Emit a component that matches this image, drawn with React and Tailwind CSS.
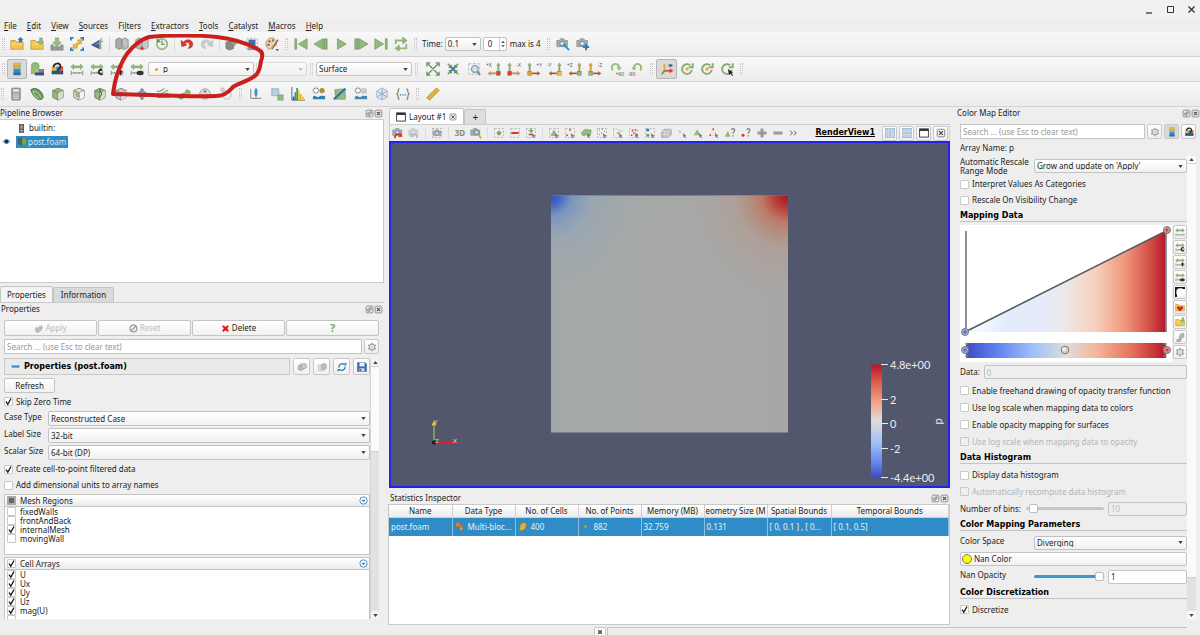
import { useState } from "react";

const green = "#93bb7c";
const darkGreen = "#5f8f4e";

const cube = (fill) => (
  <>
    <path d="M2 4 8 1.5 14 4v8l-6 3-6-3z" fill={fill} stroke="#666" strokeWidth="0.8" />
    <path d="M2 4l6 2.5L14 4M8 6.5V15" fill="none" stroke="#666" strokeWidth="0.8" />
    <path d="M8 6.5 14 4v8l-6 3z" fill="#fff" opacity="0.6" />
  </>
);

const rescale = (
  <>
    <path d="M1 5.5 4 2.5v2h8v-2l3 3-3 3v-2H4v2z" fill={green} stroke={darkGreen} strokeWidth="0.5" />
    <path d="M1.500 10v5M14.500 10v5M2 12.500h12M5 11.500v2M8 11.500v2M11 11.500v2" stroke="#777" strokeWidth="0.9" fill="none" />
  </>
);

const folder = (
  <>
    <path d="M1 14V4h5l1.500 2H15v8z" fill="#f4c64e" stroke="#b98a1f" strokeWidth="0.8" />
    <path d="M1.500 8h13" stroke="#fbe08f" />
  </>
);

const dashed = <rect x="2" y="2" width="12" height="12" fill="none" stroke="#aaa" strokeDasharray="3 2" />;
const picker = <path d="M9 8l5 4-2 .3 1.500 2-1 .7-1.300-2-1.200 1.300z" fill="#777" />;

const camera = (
  <>
    <path d="M1 4h3l1-2h4l1 2h3v7H1z" fill="#a9b0b5" stroke="#7d858a" strokeWidth="0.8" />
    <circle cx="7" cy="7.500" r="2.600" fill="#dceaf3" stroke="#5f7482" />
  </>
);

const axis = (a, b, left) =>
  left ? (
    <>
      <path d="M13 1l2 3h-1.200v7h-1.600V4H11z" fill={a} stroke="#5d5d3d" strokeWidth="0.300" />
      <path d="M1 13l3-2.200v1.400h6v1.600H4v1.400z" fill={b} stroke="#7d4d2d" strokeWidth="0.300" />
      <rect x="11" y="11" width="4" height="4" fill={a} stroke="#765" strokeWidth="0.700" />
    </>
  ) : (
    <>
      <path d="M3 1l2 3H3.800v7H2.200V4H1z" fill={a} stroke="#5d5d3d" strokeWidth="0.300" />
      <path d="M15 13l-3-2.200v1.400H6v1.600h6v1.400z" fill={b} stroke="#7d4d2d" strokeWidth="0.300" />
      <rect x="1" y="11" width="4" height="4" fill={a} stroke="#765" strokeWidth="0.700" />
    </>
  );

const ring = (
  <path d="M13.500 9A5.600 5.600 0 1 1 11.500 3.700M14.500 1.500v4.500h-4.500" fill="none" stroke="#86ad70" strokeWidth="2.200" />
);

const gear = (
  <>
    <circle cx="8" cy="8" r="4.500" fill="none" stroke="#aaa" strokeWidth="2.200" />
    <path d="M8 1v2.500M8 12.500V15M1.900 4.500l2.200 1.300M11.900 10.200l2.200 1.300M1.900 11.500l2.200-1.300M11.900 5.800l2.200-1.300" stroke="#aaa" strokeWidth="2.200" />
    <circle cx="8" cy="8" r="1.500" fill="#bbb" />
  </>
);

const colorBar = (
  <>
    <rect x="4" y="1" width="8" height="14" fill="#3b8fc0" />
    <rect x="4" y="1" width="8" height="4" fill="#f3b02b" />
    <rect x="4" y="5" width="8" height="3" fill="#b5b95f" />
    <rect x="4" y="12" width="8" height="3" fill="#2f67a8" />
  </>
);

const flagBar = (
  <>
    <path d="M2 5h5v9H2z" fill="#f3b02b" />
    <path d="M7 5h4v9H7z" fill="#3b9bc0" />
    <path d="M11 5h4v9h-4z" fill="#e5542d" />
    <path d="M2 10h13v4H2z" fill="#29558c" />
  </>
);

const icons = {
  open: <>{folder}<path d="M10 6h4V3h1.500L12 0 8.500 3H10z" fill="#2f7eb5" /></>,
  load: <>{folder}<path d="M11 1h3v4h1.500L12 9 8.500 5H11z" fill={green} stroke={darkGreen} strokeWidth="0.5" /></>,
  save: <><path d="M1 9h3v2h8V9h3v6H1z" fill="#999" stroke="#777" strokeWidth="0.6" /><path d="M6 1h4v5h3l-5 5-5-5h3z" fill={green} stroke={darkGreen} strokeWidth="0.5" /></>,
  capture: <><path d="M1 4V1h3M12 1h3v3M15 12v3h-3M4 15H1v-3" fill="none" stroke="#2f7eb5" strokeWidth="2" /><path d="M3 13l1-5 1.500 1 4-4-1-1.500 5-.5-.5 5-1.500-1-4 4 1 1.500z" fill="#f4b62c" stroke="#b98a1f" strokeWidth="0.6" /></>,
  prism: <><path d="M1 9 11 3v11z" fill="#3a5a9c" /><path d="M4 9l7-4v3z" fill="#57b07d" /><path d="M6 9l5 2v2z" fill="#d83a2d" /><path d="M12 3l2-2M13 5h2" stroke="#777" /><path d="M11 3h2v11h-2z" fill="#8aa" /></>,
  server: <><path d="M1 3l4-2 3 2v9l-3 2-4-2z" fill="#aaa" stroke="#808080" /><path d="M8 3l3-2 4 2v9l-4 2-3-2z" fill="#c0c0c0" stroke="#888" /><path d="M7 11h4v2l-2 2-2-2z" fill={green} /></>,
  serverOff: <><path d="M1 3l4-2 3 2v9l-3 2-4-2z" fill="#b5b5b5" stroke="#909090" /><path d="M8 3l3-2 4 2v9l-4 2-3-2z" fill="#c9c9c9" stroke="#999" /><circle cx="8" cy="13" r="2" fill="#d33" /></>,
  history: <><circle cx="8" cy="8" r="6" fill="none" stroke={green} strokeWidth="2" /><path d="M2 1v5h5z" fill={darkGreen} /><path d="M8 4v4.500h3" fill="none" stroke={darkGreen} strokeWidth="1.300" /></>,
  undo: <path d="M1 4l1 7 6-2-2.200-1.200C8 5 11 6 11 9c0 2-1 3-2 4 4 0 6-2 5.500-5.500C14 3 8 1 4 5.800z" fill="#d63a2b" stroke="#a02318" strokeWidth="0.5" />,
  redo: <path d="M15 4l-1 7-6-2 2.200-1.200C8 5 5 6 5 9c0 2 1 3 2 4-4 0-6-2-5.500-5.500C2 3 8 1 12 5.800z" fill="#ccc" stroke="#aaa" strokeWidth="0.5" />,
  extract: <><path d="M1 6l5-2 4 2v7l-5 2-4-2z" fill="#8a8a8a" stroke="#666" strokeWidth="0.600" /><path d="M7 6h4V2l4 4-4 4V8H7z" fill={green} stroke={darkGreen} strokeWidth="0.400" /></>,
  clipboard: <><path d="M4 3h8v7H4z" fill="#3d6fb4" /><path d="M3 11h10v4H3z" fill="#999" /><path d="M2 2h12v12H2z" fill="none" stroke="#999" strokeDasharray="2 2" /></>,
  palette: <><path d="M8 1C3 1 1 5 1 8s2 6 5 6c2 0 1-2 2-3s3 0 5-2c1-3-1-8-5-8z" fill="#f0d1a8" stroke="#a37a4d" strokeWidth="0.800" /><circle cx="5" cy="5" r="1.300" fill="#d33" /><circle cx="9" cy="4" r="1.300" fill="#3a9a5a" /><circle cx="4" cy="9" r="1.300" fill="#36c" /><path d="M15 3 8 14" stroke="#9a5a35" strokeWidth="1.500" /><path d="M12 14h4l-2 2z" fill="#333" /></>,
  first: <path d="M1 2h2v12H1zM15 2v12L5 8z" fill={green} stroke={darkGreen} strokeWidth="0.7" />,
  prev: <path d="M10 2v12L0 8zM11 2h1.500v12H11zM13.500 2H15v12h-1.500z" fill={green} stroke={darkGreen} strokeWidth="0.7" />,
  play: <path d="M4 2l10 6-10 6z" fill={green} stroke={darkGreen} strokeWidth="0.7" />,
  next: <path d="M6 2v12l10-6zM1 2h1.500v12H1zM3.500 2H5v12H3.500z" fill={green} stroke={darkGreen} strokeWidth="0.7" />,
  last: <path d="M13 2h2v12h-2zM1 2v12l10-6z" fill={green} stroke={darkGreen} strokeWidth="0.7" />,
  loop: <><path d="M2 8V4h9M14 8v5H5" fill="none" stroke={green} strokeWidth="2.200" /><path d="M10 0l5 4-5 4zM6 9l-5 4 5 3z" fill={green} stroke={darkGreen} strokeWidth="0.500" /></>,
  cameraLink: <>{camera}<path d="M9 9l6 6" stroke="#2f8ecb" strokeWidth="2" /><circle cx="9.500" cy="9.500" r="1.700" fill="#2f8ecb" /></>,
  cameraAdd: <>{camera}<path d="M11.500 8v7M8 11.500h7" stroke="#2f7eb5" strokeWidth="2.400" /></>,
  colorBar,
  editMap: <><circle cx="6" cy="5" r="4.500" fill={green} stroke={darkGreen} strokeWidth="0.600" /><rect x="1" y="7" width="6" height="7" fill={green} /><g transform="translate(4 4) scale(.8)">{flagBar}</g></>,
  separateMap: <>{flagBar}<path d="M4 6c0-5 8-6 8-1 0 3-3 2-3 5" fill="none" stroke="#222" strokeWidth="2" /></>,
  rescale,
  rescaleC: <>{rescale}<path d="M14 9.500a2.500 2.500 0 1 0 0 4" fill="none" stroke="#222" strokeWidth="2" /></>,
  rescaleT: <>{rescale}<path d="M12 9v6M10 11h4" fill="none" stroke="#222" strokeWidth="2" /></>,
  rescaleV: <>{rescale}<ellipse cx="11.500" cy="12.500" rx="4" ry="2.500" fill="#333" /></>,
  fit: <path d="M2 2l12 12M14 2 2 14M1 5V1h4M11 1h4v4M15 11v4h-4M5 15H1v-4" fill="none" stroke="#6e8f5c" strokeWidth="1.500" />,
  fitData: <><path d="M2 2l12 12M14 2 2 14M6 3v3H3M10 3v3h3M6 13v-3H3M10 13v-3h3" fill="none" stroke="#6e8f5c" strokeWidth="1.500" /><circle cx="8" cy="8" r="2.600" fill="#2f8ecb" /></>,
  zoomBox: <>{dashed}<circle cx="9" cy="8" r="3.800" fill="#cfe2f0" stroke="#7d99ad" strokeWidth="1.300" /><path d="M12 11l3 4" stroke="#888" strokeWidth="2" /></>,
  posX: <>{axis("#8cb96c", "#e0a32a", true)}<rect x="11" y="11" width="4" height="4" fill="#d8402c" /></>,
  negX: <>{axis("#8cb96c", "#e0a32a", false)}<rect x="1" y="11" width="4" height="4" fill="#d8402c" /></>,
  posY: <>{axis("#8cb96c", "#d8402c", false)}<rect x="1" y="11" width="4" height="4" fill="#e0a32a" /></>,
  negY: <>{axis("#8cb96c", "#d8402c", true)}<rect x="11" y="11" width="4" height="4" fill="#f4c22c" /></>,
  posZ: <>{axis("#e0a32a", "#d8402c", true)}<rect x="11" y="11" width="4" height="4" fill="#8cb96c" /></>,
  negZ: <>{axis("#e0a32a", "#d8402c", false)}<rect x="1" y="11" width="4" height="4" fill="#8cb96c" /></>,
  rotCw: <><path d="M4.500 9.500A4.200 4.200 0 1 1 11.500 6" fill="none" stroke={green} strokeWidth="2.200" /><path d="M8.500 6h6l-3 4z" fill={green} /></>,
  rotCcw: <><path d="M11.500 9.500A4.200 4.200 0 1 0 4.500 6" fill="none" stroke={green} strokeWidth="2.200" /><path d="M7.500 6h-6l3 4z" fill={green} /></>,
  orient: <><path d="M5 2v8h8" fill="none" stroke="#e0a32a" strokeWidth="1.800" /><path d="M5 10h9M11 8l3 2-3 2" fill="none" stroke="#d8402c" strokeWidth="1.500" /><path d="M5 10l-3 4" stroke="#6e9a58" strokeWidth="2" /><ellipse cx="12" cy="4" rx="3.500" ry="2" fill="#aab7c4" /><circle cx="12" cy="4" r="1.400" fill="#345" /></>,
  center: <>{ring}<circle cx="8" cy="8" r="2" fill="#f0a92a" /></>,
  pickCenter: <>{ring}<path d="M9 8l6 4-2 .500 2 2.500-1 1-2-2.500-1.500 1.500z" fill="#222" /></>,
  calculator: <><rect x="3" y="1" width="10" height="14" rx="1" fill="#9a9a9a" stroke="#777" strokeWidth="0.600" /><rect x="4.500" y="2.500" width="7" height="3" fill="#e4e4e4" /><path d="M5 8h6M5 10.500h6M5 13h6" stroke="#fff" strokeWidth="1.300" strokeDasharray="1.500 .8" /></>,
  contour: <><path d="M1 3c6-4 14 2 14 9-3 6-12 0-14-9z" fill="#6f9c5e" stroke="#466b3a" /><path d="M4 5c4 0 7 3 8 7M3 5c1 4 4 7 7 8" fill="none" stroke="#c8ddb8" /></>,
  clip: cube(green),
  slice: <>{cube("#e3e3e3")}<path d="M4 5l5 2v6l-5-2z" fill={green} /></>,
  threshold: <>{cube(green)}<path d="M7 2l3 6-3 5" stroke="#444" fill="none" /></>,
  subset: cube("#c9c9c9"),
  glyph: <><path d="M8 1l3 3H5zM8 15l3-3H5zM1 8l3-3v6zM15 8l-3-3v6z" fill="#5e86b2" /><circle cx="8" cy="8" r="3.600" fill="#9db7d1" stroke="#4f7399" /></>,
  stream: <path d="M1 12h14M1 8h4c3 0 4-4 9-4M1 10h5c3 0 3-3 8-3M1 5h3c2 0 3-3 6-3" fill="none" stroke="#7ca566" strokeWidth="1.200" />,
  warp: <path d="M1 12l3-4 5-1 2-4 4 2-1 6-6 1-3 2z" fill={green} stroke={darkGreen} strokeWidth="0.800" />,
  group: <><circle cx="8" cy="8" r="6" fill="#ddd" stroke="#999" /><circle cx="8" cy="5" r="1.600" fill="#888" /><circle cx="5" cy="10" r="1.600" fill="#888" /><circle cx="11" cy="10" r="1.600" fill="#888" /></>,
  particle: <><circle cx="9" cy="9" r="5" fill="#eee" stroke="#bbb" /><circle cx="4" cy="3" r="2" fill="#ddd" stroke="#aaa" /></>,
  probe: <><path d="M2 2v11h12" fill="none" stroke="#777" /><ellipse cx="8" cy="6" rx="1.800" ry="4.500" fill="#3c97cf" /><path d="M8 10v3" stroke="#3c97cf" /></>,
  select: <><rect x="2" y="2" width="8" height="8" fill="#b9cfe4" stroke="#7e9cb8" strokeDasharray="2 1" /><rect x="9" y="9" width="6" height="6" fill={green} stroke={darkGreen} strokeWidth="0.600" /></>,
  histogram: <><path d="M1 0v15h15" fill="none" stroke="#333" strokeWidth="0.800" /><path d="M2 11h2v4H2z" fill="#2b5ca8" /><path d="M4 6h2v9H4z" fill="#2f8ecb" /><path d="M6 1h2v14H6z" fill="#38a06a" /><path d="M8 4h2v11H8z" fill="#e6cf2c" /><path d="M10 8h2v7h-2z" fill="#f0a92a" /><path d="M12 11h3v4h-3z" fill="#f2d02c" /></>,
  plotTime: <><circle cx="4.500" cy="4" r="3" fill="#fff" stroke="#777" /><circle cx="11.500" cy="4" r="3" fill="#b58a3c" /><path d="M1 11c3-3 4 2 7 0s4 0 7-1v4H1z" fill="#2f7eb5" /></>,
  plotLine: <><path d="M2 3l12-1v12H3z" fill={green} stroke={darkGreen} strokeWidth="0.600" /><path d="M1 14 14 2" stroke="#2f6fa5" strokeWidth="2.400" /></>,
  plotSel: <><circle cx="4.500" cy="4" r="3" fill="#fff" stroke="#777" /><path d="M9 2h5v5H9z" fill="#cbd9c0" stroke="#999" strokeDasharray="1 1" /><path d="M1 11c3-3 4 2 7 0s4 0 7-1v4H1z" fill="#4b87b5" /></>,
  star: <><path d="M8 1l6 3.500v7L8 15l-6-3.500v-7z" fill="#dfe9f2" stroke="#9bb0c4" /><path d="M8 2v12M3 5l10 6M13 5 3 11" stroke="#7f9fc0" /></>,
  braces: <><path d="M4 2C1 2 4 7 1 8c3 1 0 6 3 6M12 2c3 0 0 5 3 6-3 1 0 6-3 6" fill="none" stroke="#777" strokeWidth="1.300" /><path d="M4.500 9h1.500M7.300 9h1.500M10 9h1.500" stroke="#2f7eb5" strokeWidth="1.500" /></>,
  ruler: <path d="M1 12 12 1l3 3L4 15z" fill="#e3b23a" stroke="#a37b1d" strokeWidth="0.800" />,
  camUndo: <>{camera}<path d="M3 15c-1-5 3-8 8-6l1-2 2 6-6 .5 1.500-2C7 10 5 12 5 15z" fill="#d63a2b" /></>,
  camRedo: <><g opacity="0.4">{camera}</g><path d="M13 15c1-5-3-8-8-6L4 7l-2 6 6 .5L6.500 11.500C9 10 11 12 11 15z" fill="#bbb" /></>,
  camShot: <>{dashed}<g transform="translate(2 2) scale(.85)">{camera}</g></>,
  camZoom: <>{camera}<circle cx="9" cy="7" r="3" fill="#bcd4e6" stroke="#4d7591" /><path d="M11 10l4 5" stroke="#d6a52c" strokeWidth="2.200" /></>,
  selAdd: <>{dashed}<path d="M8 5v6M5 8h6" stroke="#79a860" strokeWidth="3" /></>,
  selSub: <>{dashed}<path d="M3 8h10" stroke="#d63a2b" strokeWidth="2.600" /></>,
  selToggle: <>{dashed}<path d="M8 2v6M5 5h6" stroke="#79a860" strokeWidth="2" /><path d="M5 10h5" stroke="#d63a2b" strokeWidth="2" />{picker}</>,
  selCells: <>{dashed}<path d="M8 3l5 9H3z" fill={green} />{picker}</>,
  selPoints: <>{dashed}<circle cx="8" cy="4" r="1.200" fill="#d63a2b" /><circle cx="4" cy="11" r="1.200" fill="#d63a2b" />{picker}</>,
  selFrustum: <><path d="M2 7l5-4 8 1-1 7-6-1-2 2-3-1z" fill={green} stroke={darkGreen} strokeWidth="0.600" />{picker}</>,
  selFrPts: <>{dashed}<path d="M4 4h1M8 3h1M11 6h1M7 8h1M4 10h1" stroke="#d63a2b" strokeWidth="1.500" />{picker}</>,
  selPoly: <><path d="M2 2l12 3-6 3 6 6H2z" fill="none" stroke="#aaa" strokeDasharray="2 1.500" /><path d="M5 8l5-2v4z" fill={green} />{picker}</>,
  selPolyPts: <><path d="M2 2l12 3-4 3 4 6H2z" fill="none" stroke="#aaa" strokeDasharray="2 1.500" /><path d="M5 5h2M9 4h2M7 8h2M4 11h2M11 10h2" stroke="#d63a2b" strokeWidth="1.700" />{picker}</>,
  selBlocks: <>{dashed}<circle cx="5" cy="4" r="2" fill="#2f7eb5" /><circle cx="5" cy="11" r="2" fill="#57a070" />{picker}</>,
  selFrBlocks: <g opacity="0.7"><path d="M2 6l4-3h9v7l-4 4H2z" fill="#aaa" stroke="#888" /><path d="M2 6h9l4-3M11 6v8M2 10h9M6.500 6v8" fill="none" stroke="#ddd" /></g>,
  selHover: <><circle cx="5" cy="6" r="2" fill="#ccc" />{picker}</>,
  selTri: <><path d="M7 3l5 8H2z" fill={green} />{picker}</>,
  selTriPts: <><path d="M7 3l5 8H2z" fill="none" stroke="#bbb" strokeDasharray="2 1.500" /><circle cx="7" cy="3" r="1.200" fill="#d63a2b" /><circle cx="3" cy="11" r="1.200" fill="#d63a2b" />{picker}</>,
  askCells: <><path d="M5 5l4 8H1z" fill={green} /><path d="M10 4c1-3 5-2 4 1-1 2-2 1-2 4M12 11v1.500" fill="none" stroke="#777" strokeWidth="1.500" /></>,
  askPoints: <><circle cx="4" cy="11" r="2" fill="#d63a2b" /><path d="M9 4c1-3 5-2 4 1-1 2-2 1-2 4M11 11v1.500" fill="none" stroke="#777" strokeWidth="1.500" /></>,
  grow: <path d="M8 2v12M2 8h12" stroke="#999" strokeWidth="4" />,
  shrink: <path d="M2 8h12" stroke="#999" strokeWidth="4" />,
  more: <path d="M3 5l3 3-3 3M8 5l3 3-3 3" fill="none" stroke="#555" strokeWidth="1.300" />,
  splitH: <><rect x="0" y="1" width="16" height="14" fill="#bcd3ea" stroke="#8ea3b8" /><path d="M8 1v14" stroke="#fff" strokeWidth="4" /><path d="M8 1v14" stroke="#888" strokeWidth="1.600" /></>,
  splitV: <><rect x="0" y="1" width="16" height="14" fill="#bcd3ea" stroke="#8ea3b8" /><path d="M0 8h16" stroke="#fff" strokeWidth="4" /><path d="M0 8h16" stroke="#888" strokeWidth="1.600" /></>,
  windowed: <><rect x="1" y="1.500" width="14" height="13" fill="#fff" stroke="#333" strokeWidth="1.400" /><path d="M1 3h14" stroke="#333" strokeWidth="3.500" /></>,
  close: <><rect x="2" y="2" width="12" height="12" rx="2" fill="#eee" stroke="#777" strokeWidth="1.400" /><path d="M5 5l6 6M11 5l-6 6" stroke="#444" strokeWidth="1.800" /></>,
  float: <><rect x="2" y="2" width="12" height="12" rx="2" fill="#eee" stroke="#777" strokeWidth="1.400" /><path d="M5 7h4v4H5zM8 5h3v3" fill="none" stroke="#555" strokeWidth="1.200" /></>,
  gear,
  apply: <path d="M3 6h6l1-3 2 1 2-2 1 5-2 5-4 1v2H5l-3-3z" fill="#bbb" stroke="#aaa" strokeWidth="0.600" />,
  reset: <><circle cx="8" cy="8" r="6" fill="none" stroke="#9a9a9a" strokeWidth="2.200" /><path d="M4 12l8-8" stroke="#9a9a9a" strokeWidth="2.200" /></>,
  del: <path d="M2 4l2-2 4 3 4-3 2 2-3 4 3 4-2 2-4-3-4 3-2-2 3-4z" fill="#d3221f" />,
  copy: <><path d="M2 6l5-3 4 2v6l-5 3-4-2z" fill="#bbb" stroke="#999" /><path d="M7 4l4-2 4 2v5l-4 2-4-2z" fill="#ccc" stroke="#999" /></>,
  paste: <><path d="M2 5h8v9H2z" fill="#ddd" stroke="#bbb" /><path d="M7 4l4-2 4 2v6l-4 3-4-2z" fill="#bbb" stroke="#aaa" /></>,
  refresh: <><path d="M3 9a5.500 5.500 0 0 1 9-5M13 7a5.500 5.500 0 0 1-9 5" fill="none" stroke="#2f7eb5" strokeWidth="2" /><path d="M10 5h5V0zM6 11H1v5z" fill="#2f7eb5" /></>,
  floppy: <><path d="M1 1h12l2 2v12H1z" fill="#3d6fb4" stroke="#2b4f85" /><path d="M4 1h8v6H4z" fill="#eef3f8" /><path d="M4 10h8v5H4z" fill="#dde" /><path d="M5 11h2v3H5z" fill="#345" /></>,
  minus: <path d="M1 6h14v4H1z" fill="#2f8ecb" />,
  computer: <><rect x="4" y="1" width="8" height="14" fill="#666" stroke="#333" /><path d="M6 4h4M6 7h4" stroke="#eee" strokeWidth="1.300" /><path d="M6 11h4v2H6z" fill="#ccc" /></>,
  foam: <><path d="M1 3l5-1v12l-5-2z" fill="#5c6b52" stroke="#39452f" /><path d="M7 3l5-1 3 2v9l-4 2-4-2z" fill="#79a35c" stroke="#567a41" /></>,
  eye: <><path d="M0 8c4-6 12-6 16 0-4 6-12 6-16 0z" fill="#b9c6d4" /><circle cx="8" cy="8" r="4" fill="#24679b" /><circle cx="8" cy="8" r="2.300" fill="#101820" /></>,
  expand: <><circle cx="8" cy="8" r="6.500" fill="#fff" stroke="#2f7eb5" strokeWidth="1.500" /><path d="M4.500 6.500h7L8 11z" fill="#2f7eb5" /></>,
  blocks: <><circle cx="5" cy="5" r="4" fill="#cf8a55" stroke="#9a5f32" /><circle cx="10" cy="8" r="4" fill="#c67d4a" stroke="#9a5f32" /><circle cx="11" cy="12" r="3" fill="#d8a268" stroke="#9a5f32" /></>,
  cell: <path d="M4 5l5-4 6 1-1 9-6 4H2z" fill="#d8b53a" stroke="#8f741e" />,
  point: <circle cx="8" cy="8" r="2.200" fill="#e0a32a" />,
  curve: <><path d="M1 15V1h14" fill="none" stroke="#111" strokeWidth="3" /><circle cx="9" cy="9" r="6.500" fill="#fff" /><path d="M0 0h4v4H0zM12 0h4v3h-4zM0 12h3v4H0z" fill="#111" /></>,
  heart: <>{folder}<path d="M8 15 3 10c0-4 4-4 5-1 1-3 5-3 5 1z" fill="#d3221f" /></>,
  wrench: <path d="M3 15v-3h4V8l2-5 5-1v6l-4 2-1 5z" fill="#bbb" stroke="#888" />,
};

const Icon = ({ name, className = "size-[14px]" }) => (
  <svg viewBox="0 0 16 16" className={`shrink-0 ${className}`} aria-hidden="true">
    {icons[name]}
  </svg>
);

const Handle = ({ className = "mx-[3px]" }) => (
  <div className={`h-3 w-[3px] shrink-0 border-x border-dotted border-[#c4c4c4] ${className}`} />
);
const Sep = () => <div className="mx-[2px] h-4 w-px shrink-0 bg-[#dcdcdc]" />;

const ToolButton = ({ name, label, pressed, wide }) => (
  <button
    type="button"
    aria-label={name}
    className={`relative flex h-5 shrink-0 items-center justify-center ${wide ? "w-[21px]" : "w-5"} ${
      pressed ? "rounded-[2px] border border-[#b5b5b5] bg-[#dadada]" : ""
    }`}
  >
    <Icon name={name} />
    {label && <span className={`absolute text-[5px] leading-none text-[#555] ${label.at}`}>{label.text}</span>}
  </button>
);

const Tools = ({ names, wide }) => names.map((n) => <ToolButton key={n} name={n} wide={wide} />);

const Select = ({ id, label, value, options = [], className = "", disabled, dot }) => (
  <div className={`relative flex h-[14px] items-center ${className}`}>
    <select
      id={id}
      aria-label={label}
      defaultValue={value}
      disabled={disabled}
      className={`h-full w-full appearance-none rounded-[2px] border border-[#c2c2c2] bg-linear-to-b from-white to-[#f1f1f1] leading-none outline-none ${
        disabled ? "opacity-50" : ""
      } ${dot ? "pl-[14px]" : "pl-[2px]"}`}
    >
      {[value, ...options].map((o) => (
        <option key={o}>{o}</option>
      ))}
    </select>
    {dot && <span className="pointer-events-none absolute left-[7px] size-[3px] rounded-full bg-[#e0a32a]" />}
    <svg viewBox="0 0 6 4" className={`pointer-events-none absolute right-[4px] h-[3px] w-[5px] ${disabled ? "opacity-30" : ""}`}>
      <path d="M0 0h6L3 4z" fill="#444" />
    </svg>
  </div>
);

const Check = ({ label, checked, disabled, className = "", small }) => (
  <label className={`flex items-center ${small ? "gap-1" : "gap-[3px]"} ${disabled ? "text-[#b5b5b5]" : ""} ${className}`}>
    <span className="relative flex size-[9px] shrink-0">
      <input
        type="checkbox"
        defaultChecked={checked}
        disabled={disabled}
        className="peer size-[9px] appearance-none rounded-[1px] border border-[#c9c9c9] bg-white disabled:bg-[#efefef]"
      />
      <svg viewBox="0 0 9 9" className="pointer-events-none absolute inset-0 hidden size-[9px] peer-checked:block">
        <path d="M2 4.500l1.800 2.700L7 1.500" fill="none" stroke="#111" strokeWidth="1.300" />
      </svg>
    </span>
    <span className="whitespace-nowrap">{label}</span>
  </label>
);

const DockTitle = ({ title, className = "" }) => (
  <div className={`flex h-3 shrink-0 items-center justify-between ${className}`}>
    <h2>{title}</h2>
    <div className="flex">
      <button type="button" aria-label={`Float ${title}`}><Icon name="float" className="size-[9px]" /></button>
      <button type="button" aria-label={`Close ${title}`}><Icon name="close" className="size-[9px]" /></button>
    </div>
  </div>
);

const SmallButton = ({ name, pressed, className = "h-[14px] w-[15px]" }) => (
  <button
    type="button"
    aria-label={name}
    className={`flex shrink-0 items-center justify-center rounded-[2px] border border-[#c8c8c8] ${
      pressed ? "bg-[#d9d9d9]" : "bg-linear-to-b from-white to-[#f0f0f0]"
    } ${className}`}
  >
    <Icon name={name} className="size-[10px]" />
  </button>
);

const ScrollBar = ({ thumb }) => (
  <div className="flex w-[9px] shrink-0 flex-col border-l border-[#d5d5d5] bg-[#e2e2e2]">
    <div className="flex h-2 items-center justify-center bg-[#f4f4f4]">
      <svg viewBox="0 0 6 4" className="h-[3px] w-[5px]"><path d="M0 4h6L3 0z" fill="#444" /></svg>
    </div>
    <div className={`border-y border-[#cfcfcf] bg-[#fbfbfb] ${thumb}`} />
    <div className="mt-auto flex h-2 items-center justify-center bg-[#f4f4f4]">
      <svg viewBox="0 0 6 4" className="h-[3px] w-[5px]"><path d="M0 0h6L3 4z" fill="#444" /></svg>
    </div>
  </div>
);

const menus = ["File", "Edit", "View", "Sources", "Filters", "Extractors", "Tools", "Catalyst", "Macros", "Help"];
// index of the underlined letter in each menu name
const accel = { Filters: 2 };

const MenuBar = () => (
  <nav className="flex h-[13px] shrink-0 items-center gap-[10px] pl-1">
    {menus.map((m) => {
      const i = accel[m] ?? 0;
      return (
        <button key={m} type="button">
          {m.slice(0, i)}<u className="underline-offset-1">{m[i]}</u>{m.slice(i + 1)}
        </button>
      );
    })}
  </nav>
);

const bar = "flex h-[25px] items-center border-b border-[#d2d2d2] bg-linear-to-b from-[#f8f8f8] to-[#ececec]";

const Toolbars = () => (
  <div className="relative shrink-0">
    <div className={bar}>
      <Handle className="mx-[2px]" />
      <Tools names={["open", "load", "save", "capture", "prism"]} />
      <Sep />
      <Tools names={["server", "serverOff", "history"]} />
      <Sep />
      <Tools names={["undo", "redo"]} />
      <Sep />
      <Tools names={["extract", "clipboard", "palette"]} />
      <Handle />
      <Tools names={["first", "prev", "play", "next", "last", "loop"]} />
      <Handle />
      <label htmlFor="time" className="px-[2px]">Time:</label>
      <Select id="time" value="0.1" options={["0.2", "0.3", "0.4", "0.5"]} className="w-9" />
      <div className="ml-[2px] flex h-[14px] w-6 rounded-[2px] border border-[#c2c2c2] bg-white">
        <input aria-label="Time step" defaultValue="0" className="w-[15px] pl-1 outline-none" />
        <svg viewBox="0 0 8 12" className="h-3 w-2 border-l border-[#ccc]">
          <path d="M1.500 4.500h5L4 2zM1.500 7.500h5L4 10z" fill="#444" />
        </svg>
      </div>
      <span className="px-[3px]">max is 4</span>
      <Handle />
      <Tools names={["cameraLink", "cameraAdd"]} />
    </div>
    <div className={bar}>
      <Handle className="mx-[2px]" />
      <ToolButton name="colorBar" pressed />
      <Tools names={["editMap", "separateMap", "rescale", "rescaleC", "rescaleT", "rescaleV"]} />
      <Select label="Coloring array" value="p" options={["U"]} dot className="ml-px w-[106px]" />
      <Select label="Component" value="" disabled className="ml-[2px] w-[51px]" />
      <Handle />
      <Select label="Representation" value="Surface" options={["Wireframe", "Points"]} className="w-24" />
      <Handle />
      <div className="w-[2px]" />
      <Tools names={["fit", "fitData"]} />
      <ToolButton name="zoomBox" wide />
      <ToolButton name="posX" label={{ text: "+X", at: "left-[2px] top-[4px]" }} />
      <ToolButton name="negX" label={{ text: "-X", at: "right-[3px] top-[4px]" }} />
      <ToolButton name="posY" label={{ text: "+Y", at: "right-[2px] top-[4px]" }} />
      <ToolButton name="negY" wide label={{ text: "-Y", at: "left-[3px] top-[4px]" }} />
      <ToolButton name="posZ" label={{ text: "+Z", at: "left-[2px] top-[4px]" }} />
      <ToolButton name="negZ" label={{ text: "-Z", at: "right-[3px] top-[4px]" }} />
      <ToolButton name="rotCw" wide label={{ text: "+90", at: "right-[2px] bottom-[2px]" }} />
      <ToolButton name="rotCcw" wide label={{ text: "-90", at: "left-[2px] bottom-[2px]" }} />
      <Handle />
      <ToolButton name="orient" pressed wide />
      <ToolButton name="center" />
      <ToolButton name="center" />
      <ToolButton name="pickCenter" />
      <Handle />
    </div>
    <div className={bar}>
      <Handle className="mx-px" />
      <Tools wide names={["calculator", "contour", "clip", "slice", "threshold", "subset", "glyph", "stream", "warp", "group", "particle"]} />
      <Handle />
      <Tools wide names={["probe", "select", "histogram", "plotTime", "plotLine", "plotSel", "star", "braces"]} />
      <Handle />
      <Tools wide names={["ruler"]} />
    </div>
    <svg viewBox="0 0 160 70" className="pointer-events-none absolute top-[2px] left-[107px] h-[70px] w-40">
      <path
        d="M42 3C60 1 92 1 110 3c16 2 32 7 42 13 4 2 4 6 2 11-1 6-1 10-5 14-7 6-17 8-23 12-3 3-7 9-17 9-20 1-30 0-65-1-18 0-30-1-38-1 1-7 2-13 4-19C14 28 19 20 25 14c5-5 10-9 17-11z"
        fill="none"
        stroke="#c9201f"
        strokeWidth="4"
        strokeLinejoin="round"
      />
    </svg>
  </div>
);

const PipelineBrowser = () => (
  <section className="flex h-[176px] shrink-0 flex-col">
    <DockTitle title="Pipeline Browser" className="pr-px" />
    <ul className="flex-1 border-y border-r border-[#cacaca] bg-white pt-px">
      <li className="flex h-[14px] items-center gap-[3px] pl-[17px]">
        <Icon name="computer" className="size-[9px]" />
        builtin:
      </li>
      <li className="flex h-[13px] items-center">
        <button type="button" aria-label="Toggle visibility" className="flex w-4 pl-[2px]"><Icon name="eye" className="size-[9px]" /></button>
        <span className="flex h-3 items-center gap-px bg-[#308cc6] px-[2px] text-[#dcecf6]">
          <Icon name="foam" className="size-[9px]" />
          post.foam
        </span>
      </li>
    </ul>
  </section>
);

const ListBox = ({ title, partial, items, className = "" }) => (
  <div className={`border border-[#c4c4c4] bg-white ${className}`}>
    <div className="flex h-3 items-center justify-between border-b border-[#c4c4c4] bg-linear-to-b from-white to-[#ebebeb] pr-px pl-[2px]">
      {partial ? (
        <label className="flex items-center gap-1">
          <input type="checkbox" className="size-[9px] appearance-none border-2 border-[#aaa] bg-[#666]" />
          {title}
        </label>
      ) : (
        <Check label={title} checked small />
      )}
      <Icon name="expand" className="size-[9px]" />
    </div>
    <div className="pl-[2px]">
      {items.map(([name, on]) => (
        <Check key={name} label={name} checked={on} small className="h-[9px] leading-[9px]" />
      ))}
    </div>
  </div>
);

const FormRow = ({ id, label, value, options }) => (
  <div className="flex h-[17px] items-center">
    <label htmlFor={id} className="w-11 shrink-0 pb-1 whitespace-nowrap">{label}</label>
    <Select id={id} value={value} options={options} className="h-[15px] flex-1" />
  </div>
);

const actionButton =
  "flex h-4 flex-1 items-center justify-center gap-[2px] rounded-[2px] border border-[#c4c4c4] bg-linear-to-b from-white to-[#f1f1f1]";

const PropertiesPanel = () => {
  const [tab, setTab] = useState("Properties");
  return (
    <section className="flex min-h-0 flex-1 flex-col">
      <div className="mt-1 flex h-4 shrink-0 items-end border-b border-[#c9c9c9]">
        {["Properties", "Information"].map((t) => (
          <button
            key={t}
            type="button"
            onClick={() => setTab(t)}
            className={`rounded-t-[2px] border border-b-0 border-[#c4c4c4] ${
              tab === t ? "h-4 bg-[#f4f4f4] px-[6px]" : "h-[15px] bg-[#dadada] px-[7px]"
            }`}
          >
            {t}
          </button>
        ))}
      </div>
      <DockTitle title="Properties" className="pr-px pl-px" />
      <div className="mt-[5px] flex gap-px pr-[5px] pl-1">
        <button type="button" disabled className={`${actionButton} text-[#bcbcbc]`}>
          <Icon name="apply" className="size-[9px]" />Apply
        </button>
        <button type="button" disabled className={`${actionButton} text-[#bcbcbc]`}>
          <Icon name="reset" className="size-[9px]" />Reset
        </button>
        <button type="button" className={actionButton}>
          <Icon name="del" className="size-[9px]" />Delete
        </button>
        <button type="button" aria-label="Help" className={`${actionButton} text-[11px] font-bold text-[#7ca566]`}>?</button>
      </div>
      <div className="mt-[3px] flex h-[15px] gap-[2px] pr-[5px] pl-1">
        <input
          type="search"
          aria-label="Search properties"
          placeholder="Search ... (use Esc to clear text)"
          className="h-full min-w-0 flex-1 border border-[#c4c4c4] bg-white px-[2px] outline-none placeholder:text-[#999]"
        />
        <SmallButton name="gear" className="w-[15px]" />
      </div>
      <div className="mt-[4px] mb-2 flex min-h-0 flex-1 pr-[5px] pl-1">
        <div className="min-w-0 flex-1 overflow-hidden">
          <div className="flex h-[17px] gap-[3px]">
            <h3 className="flex flex-1 items-center gap-1 border border-[#c9c9c9] bg-[#eaeaea] pl-[6px] font-['DejaVu_Sans'] font-bold text-black">
              <Icon name="minus" className="size-[9px]" />
              Properties (post.foam)
            </h3>
            {["copy", "paste", "refresh", "floppy"].map((n) => (
              <SmallButton key={n} name={n} className="h-full w-[17px]" />
            ))}
          </div>
          <button type="button" className="mt-[3px] flex h-[15px] w-[51px] items-center justify-center rounded-[2px] border border-[#c4c4c4] bg-linear-to-b from-white to-[#f1f1f1]">
            Refresh
          </button>
          <Check label="Skip Zero Time" checked className="h-[17px]" />
          <FormRow id="case" label="Case Type" value="Reconstructed Case" options={["Decomposed Case"]} />
          <FormRow id="labelsize" label="Label Size" value="32-bit" options={["64-bit"]} />
          <FormRow id="scalar" label="Scalar Size" value="64-bit (DP)" options={["32-bit (SP)"]} />
          <Check label="Create cell-to-point filtered data" checked className="h-4" />
          <Check label="Add dimensional units to array names" className="h-4" />
          <ListBox
            title="Mesh Regions"
            partial
            className="mt-px h-[61px]"
            items={[["fixedWalls", false], ["frontAndBack", false], ["internalMesh", true], ["movingWall", false]]}
          />
          <ListBox
            title="Cell Arrays"
            className="mt-[2px] h-20"
            items={[["U", true], ["Ux", true], ["Uy", true], ["Uz", true], ["mag(U)", true], ["", false]]}
          />
        </div>
        <ScrollBar thumb="h-[86px]" />
      </div>
    </section>
  );
};

const viewTools = [
  "camUndo", "camRedo", "|", "camShot", "|", "3D", "camZoom", "|", "selAdd", "selSub", "selToggle", "|",
  "selCells", "selPoints", "selFrustum", "selFrPts", "selPoly", "selPolyPts", "selBlocks", "selFrBlocks",
  "selHover", "selTri", "selTriPts", "askCells", "askPoints", "grow", "shrink", "more",
];

const ViewTabs = () => (
  <>
    <div className="mt-px flex h-4 shrink-0 items-end">
      <div className="flex h-4 items-center gap-[3px] rounded-t-[2px] border border-b-0 border-[#c4c4c4] bg-white px-[6px]">
        <Icon name="windowed" className="size-[10px]" />
        <span>Layout #1</span>
        <button type="button" aria-label="Close layout" className="flex"><Icon name="close" className="size-2" /></button>
      </div>
      <button type="button" className="h-[15px] w-[22px] rounded-t-[2px] border border-b-0 border-[#c4c4c4] bg-[#dedede] text-[10px] leading-none">+</button>
    </div>
    <div className="flex h-[17px] shrink-0 items-center border-x border-t border-[#cfcfcf] pr-px">
      {viewTools.map((n, i) => {
        if (n === "|") return <div key={i} className="mx-[3px] h-3 w-px bg-[#dcdcdc]" />;
        return (
          <button key={n} type="button" aria-label={n} className="flex w-4 shrink-0 items-center justify-center font-bold text-[#8a8a72]">
            {n === "3D" ? n : <Icon name={n} className="size-3" />}
          </button>
        );
      })}
      <span className="ml-auto pr-[7px] font-['DejaVu_Sans'] font-bold text-black underline underline-offset-1">RenderView1</span>
      <div className="flex gap-[2px]">
        {["splitH", "splitV", "windowed", "close"].map((n) => (
          <SmallButton key={n} name={n} className="size-[15px]" />
        ))}
      </div>
    </div>
  </>
);

const ticks = [
  ["4.8e+00", 221],
  ["2", 256],
  ["0", 280],
  ["-2", 305],
  ["-4.4e+00", 334],
];

const RenderView = () => (
  <div className="min-h-0 flex-1 border-2 border-[#2222ee] bg-[#52576e]">
    <svg viewBox="0 0 557 342" className="h-full w-full" fontFamily="Lato, sans-serif">
      <defs>
        <linearGradient id="base">
          <stop offset="0" stopColor="#a3a9a9" />
          <stop offset="0.5" stopColor="#a7a9a8" />
          <stop offset="1" stopColor="#a8a7a6" />
        </linearGradient>
        <radialGradient id="low" cx="0" cy="0" r="0.400">
          <stop offset="0" stopColor="#3350c0" />
          <stop offset="0.1" stopColor="#4567c4" />
          <stop offset="0.22" stopColor="#7391c4" stopOpacity="0.85" />
          <stop offset="0.45" stopColor="#90a3bb" stopOpacity="0.5" />
          <stop offset="1" stopColor="#a0a8ad" stopOpacity="0" />
        </radialGradient>
        <radialGradient id="high" cx="1" cy="0" r="0.450">
          <stop offset="0" stopColor="#a80f22" />
          <stop offset="0.12" stopColor="#b53c34" />
          <stop offset="0.25" stopColor="#bd7560" stopOpacity="0.9" />
          <stop offset="0.5" stopColor="#b39a8e" stopOpacity="0.6" />
          <stop offset="1" stopColor="#aaa5a2" stopOpacity="0" />
        </radialGradient>
        <linearGradient id="legend" x1="0" x2="0" y1="0" y2="1">
          <stop offset="0" stopColor="#b8142a" />
          <stop offset="0.15" stopColor="#dc5a47" />
          <stop offset="0.33" stopColor="#f4a184" />
          <stop offset="0.5" stopColor="#dddddd" />
          <stop offset="0.7" stopColor="#9fbef8" />
          <stop offset="0.85" stopColor="#6b8df0" />
          <stop offset="1" stopColor="#3b4cc8" />
        </linearGradient>
      </defs>
      <rect x="160" y="52" width="237" height="237" fill="url(#base)" />
      <rect x="160" y="52" width="237" height="237" fill="url(#low)" />
      <rect x="160" y="52" width="237" height="237" fill="url(#high)" />

      <path d="M43 299v-17" stroke="#8fae4c" strokeWidth="1.500" />
      <path d="M43 277l2.500 5h-5z" fill="#f0c52a" />
      <path d="M43 299h18" stroke="#d22" strokeWidth="1.300" />
      <path d="M67 299l-6-2v4z" fill="#d22" />
      <circle cx="43" cy="299" r="2.200" fill="#222" />
      <g fill="#d5d5d5" fontSize="6">
        <text x="43" y="280">Y</text>
        <text x="44" y="299">Z</text>
        <text x="62" y="299">X</text>
      </g>

      <rect x="480" y="221" width="11" height="113" fill="url(#legend)" />
      <g fill="#ececec" fontSize="11">
        {ticks.map(([t, y]) => (
          <g key={t}>
            <path d={`M490 ${y}h7`} stroke="#ececec" />
            <text x="499" y={y + 4}>{t}</text>
          </g>
        ))}
        <text transform="translate(551 281) rotate(-90)">p</text>
      </g>
    </svg>
  </div>
);

const stats = [
  { head: "Name", value: "post.foam", width: "w-[63px]" },
  { head: "Data Type", value: "Multi-bloc...", icon: "blocks", width: "w-[63px]" },
  { head: "No. of Cells", value: "400", icon: "cell", width: "w-[63px]" },
  { head: "No. of Points", value: "882", icon: "point", width: "w-[63px]" },
  { head: "Memory (MB)", value: "32.759", width: "w-[63px]" },
  { head: "eometry Size (M", value: "0.131", width: "w-[63px]" },
  { head: "Spatial Bounds", value: "[ 0, 0.1 ] , [ 0...", width: "w-[64px]" },
  { head: "Temporal Bounds", value: "[ 0.1, 0.5]", width: "" },
];

const StatisticsInspector = () => (
  <section className="-ml-px flex h-[139px] shrink-0 flex-col pt-1 pb-[2px]">
    <DockTitle title="Statistics Inspector" className="pr-px pl-[2px]" />
    <div className="flex-1 border border-[#c9c9c9] bg-white">
      <table className="w-full table-fixed border-collapse text-left">
        <thead>
          <tr className="h-3 bg-linear-to-b from-white to-[#ebebeb]">
            {stats.map((s) => (
              <th key={s.head} className={`overflow-hidden border-r border-b border-[#cfcfcf] p-0 text-center font-normal whitespace-nowrap ${s.width}`}>
                <span className="-mx-2">{s.head}</span>
              </th>
            ))}
          </tr>
        </thead>
        <tbody>
          <tr className="h-[19px] bg-[#308cc6] text-[#e6f1f8]">
            {stats.map((s) => (
              <td key={s.head} className="overflow-hidden border-r border-[#8fbddb] p-0 pl-[2px] whitespace-nowrap">
                <span className="flex items-center gap-1">
                  {s.icon && <Icon name={s.icon} className="size-[9px]" />}
                  {s.value}
                </span>
              </td>
            ))}
          </tr>
        </tbody>
      </table>
    </div>
  </section>
);

const Section = ({ children }) => (
  <h3 className="mt-px mb-[3px] h-[13px] border-b border-[#c4c4c4] font-['DejaVu_Sans'] leading-[13px] font-bold text-black">{children}</h3>
);

const TransferFunction = () => (
  <div className="flex h-[137px] gap-px">
    <svg viewBox="0 0 212 137" preserveAspectRatio="none" className="h-full min-w-0 flex-1 bg-white">
      <defs>
        <linearGradient id="opacity">
          <stop offset="0" stopColor="#ffffff" />
          <stop offset="0.2" stopColor="#e3ebfd" />
          <stop offset="0.4" stopColor="#e6ebfa" />
          <stop offset="0.5" stopColor="#ece9e7" />
          <stop offset="0.65" stopColor="#f6d0bd" />
          <stop offset="0.8" stopColor="#f0957a" />
          <stop offset="0.92" stopColor="#d24f44" />
          <stop offset="1" stopColor="#b8142a" />
        </linearGradient>
        <linearGradient id="colors">
          <stop offset="0" stopColor="#3b4cc8" />
          <stop offset="0.15" stopColor="#5f80ee" />
          <stop offset="0.33" stopColor="#9dbff9" />
          <stop offset="0.5" stopColor="#dddddd" />
          <stop offset="0.65" stopColor="#f5b69a" />
          <stop offset="0.83" stopColor="#e4735b" />
          <stop offset="1" stopColor="#b8142a" />
        </linearGradient>
      </defs>
      <path d="M5 107 206 6v101z" fill="url(#opacity)" />
      <path d="M6 6v100M206 6v101" stroke="#7d8790" strokeWidth="1.800" />
      <path d="M5 107 206 6" stroke="#555a60" strokeWidth="1.500" />
      <rect x="6" y="118" width="200" height="15" fill="url(#colors)" />
      <path d="M7 118v15M205 118v15" stroke="#777" strokeWidth="3" strokeDasharray="2 1" />
      <g stroke="#777" fill="#a9b4c8">
        <circle cx="5" cy="107" r="3.500" />
        <circle cx="5" cy="125" r="3.500" />
        <circle cx="207" cy="5" r="3.500" fill="#d9988e" />
        <circle cx="207" cy="125" r="3.500" fill="#d9988e" />
        <circle cx="105" cy="125" r="3.800" fill="#d4d4cc" />
      </g>
      <g fill="#4a75dd">
        <circle cx="5" cy="107" r="1.800" />
        <circle cx="5" cy="125" r="1.800" />
        <circle cx="207" cy="5" r="1.600" fill="#cf4436" />
        <circle cx="207" cy="125" r="1.600" fill="#cf4436" />
        <circle cx="104" cy="124" r="1.800" fill="#f6f6f2" />
      </g>
    </svg>
    <div className="flex flex-col gap-px">
      {["rescale", "rescaleC", "rescaleT", "rescaleV", "curve", "heart", "load", "wrench", "gear"].map((n) => (
        <SmallButton key={n} name={n} className="size-[14px]" />
      ))}
    </div>
  </div>
);

const slider =
  "h-[9px] min-w-0 appearance-none bg-transparent [&::-webkit-slider-runnable-track]:h-[3px] [&::-webkit-slider-runnable-track]:rounded-full [&::-webkit-slider-thumb]:-mt-[3px] [&::-webkit-slider-thumb]:size-[9px] [&::-webkit-slider-thumb]:appearance-none [&::-webkit-slider-thumb]:rounded-[2px] [&::-webkit-slider-thumb]:border [&::-webkit-slider-thumb]:border-[#bbb] [&::-webkit-slider-thumb]:bg-white";

const ColorMapEditor = () => (
  <aside className="flex w-[249px] shrink-0 flex-col pr-1 pl-[9px]">
    <DockTitle title="Color Map Editor" className="-mr-1 -ml-[3px]" />
    <div className="mt-[5px] flex h-[15px] gap-[2px]">
      <input
        type="search"
        aria-label="Search color map"
        placeholder="Search ... (use Esc to clear text)"
        className="h-full min-w-0 flex-1 border border-[#c4c4c4] bg-white px-[2px] outline-none placeholder:text-[#999]"
      />
      <SmallButton name="gear" className="size-[15px]" />
      <SmallButton name="colorBar" pressed className="size-[15px]" />
      <SmallButton name="separateMap" className="size-[15px]" />
    </div>
    <p className="mt-[3px] leading-3">Array Name: p</p>
    <div className="mt-[2px] mb-2 flex min-h-0 flex-1">
      <div className="min-w-0 flex-1 overflow-hidden">
        <div className="flex h-5 items-center">
          <label htmlFor="rescale" className="w-[74px] shrink-0 leading-[9px]">Automatic Rescale Range Mode</label>
          <Select id="rescale" value="Grow and update on 'Apply'" options={["Never"]} className="min-w-0 flex-1" />
        </div>
        <Check label="Interpret Values As Categories" className="h-4" />
        <Check label="Rescale On Visibility Change" className="h-4" />
        <Section>Mapping Data</Section>
        <TransferFunction />
        <div className="flex h-5 items-center gap-1">
          <label htmlFor="data">Data:</label>
          <input id="data" disabled defaultValue="0" className="h-[14px] min-w-0 flex-1 rounded-[2px] border border-[#c4c4c4] px-[2px] text-[#bbb]" />
        </div>
        <Check label="Enable freehand drawing of opacity transfer function" className="h-[17px]" />
        <Check label="Use log scale when mapping data to colors" className="h-[17px]" />
        <Check label="Enable opacity mapping for surfaces" className="h-[17px]" />
        <Check label="Use log scale when mapping data to opacity" disabled className="h-[17px]" />
        <Section>Data Histogram</Section>
        <Check label="Display data histogram" className="h-4" />
        <Check label="Automatically recompute data histogram" disabled className="h-[17px]" />
        <div className="flex h-[17px] items-center">
          <label htmlFor="bins" className="w-[66px] shrink-0">Number of bins:</label>
          <input id="bins" type="range" defaultValue="4" className={`${slider} w-[78px] [&::-webkit-slider-runnable-track]:bg-[#c6c6c6]`} />
          <input aria-label="Bin count" disabled defaultValue="10" className="ml-1 h-[14px] min-w-0 flex-1 rounded-[2px] border border-[#c4c4c4] px-[2px] text-[#bbb]" />
        </div>
        <Section>Color Mapping Parameters</Section>
        <div className="flex h-[17px] items-center">
          <label htmlFor="space" className="w-[74px] shrink-0 pb-1">Color Space</label>
          <Select id="space" value="Diverging" options={["RGB", "HSV", "Lab"]} className="min-w-0 flex-1" />
        </div>
        <button type="button" className="mt-px mb-[2px] flex h-[14px] w-full items-center gap-[2px] rounded-[2px] border border-[#c4c4c4] bg-linear-to-b from-white to-[#f1f1f1] pl-px">
          <span className="size-[10px] rounded-full border border-[#777] bg-[#ffff00]" />
          Nan Color
        </button>
        <div className="flex h-[17px] items-center">
          <label htmlFor="nan" className="w-[74px] shrink-0 pb-1">Nan Opacity</label>
          <input id="nan" type="range" defaultValue="100" className={`${slider} w-[70px] [&::-webkit-slider-runnable-track]:bg-[#3f97cf]`} />
          <input aria-label="Nan opacity value" defaultValue="1" className="ml-1 h-[14px] min-w-0 flex-1 rounded-[2px] border border-[#c4c4c4] bg-white px-[2px]" />
        </div>
        <Section>Color Discretization</Section>
        <Check label="Discretize" checked className="h-[15px]" />
      </div>
      <div className="flex w-[9px] shrink-0 flex-col bg-[#fafafa]">
        <div className="flex h-2 items-center justify-center border-b border-[#d5d5d5]">
          <svg viewBox="0 0 6 4" className="h-[3px] w-[5px]"><path d="M0 4h6L3 0z" fill="#444" /></svg>
        </div>
        <div className="flex-1" />
        <div className="h-[34px] border-t border-[#cfcfcf] bg-[#e2e2e2]" />
        <div className="flex h-2 items-center justify-center">
          <svg viewBox="0 0 6 4" className="h-[3px] w-[5px]"><path d="M0 0h6L3 4z" fill="#444" /></svg>
        </div>
      </div>
    </div>
  </aside>
);

export default function App() {
  return (
    <div className="flex h-screen flex-col overflow-hidden bg-[#eeeeee] font-['Noto_Sans','DejaVu_Sans',sans-serif] text-[8px] leading-[10px] text-[#222222]">
      <header className="flex h-[19px] shrink-0 items-center justify-end gap-3 bg-[#f1f1f1] pr-1">
        <button type="button" aria-label="Minimize">
          <svg viewBox="0 0 9 9" className="size-[9px]"><path d="M1 8h6" stroke="#333" strokeWidth="1.300" /></svg>
        </button>
        <button type="button" aria-label="Maximize">
          <svg viewBox="0 0 9 9" className="size-[9px]"><path d="M1.500 1.500h6v6h-6z" fill="none" stroke="#333" /></svg>
        </button>
        <button type="button" aria-label="Close window">
          <svg viewBox="0 0 9 9" className="size-[9px]"><path d="M1.500 1.500l6 6M7.500 1.500l-6 6" stroke="#333" strokeWidth="1.300" /></svg>
        </button>
      </header>
      <MenuBar />
      <Toolbars />
      <main className="flex min-h-0 flex-1">
        <div className="flex w-[32%] shrink-0 flex-col">
          <PipelineBrowser />
          <PropertiesPanel />
        </div>
        <div className="flex min-w-0 flex-1 flex-col pr-px pl-[5px]">
          <ViewTabs />
          <RenderView />
          <StatisticsInspector />
        </div>
        <ColorMapEditor />
      </main>
      <footer className="flex h-2 shrink-0 justify-center pr-[13px]">
        <div className="w-1/2" />
        <button type="button" aria-label="Cancel" className="flex w-3 items-center justify-center rounded-t-[2px] border border-b-0 border-[#c4c4c4] bg-white">
          <Icon name="del" className="size-[6px] grayscale" />
        </button>
        <div className="ml-px flex-1 border-t border-l border-[#c4c4c4]" />
      </footer>
    </div>
  );
}
